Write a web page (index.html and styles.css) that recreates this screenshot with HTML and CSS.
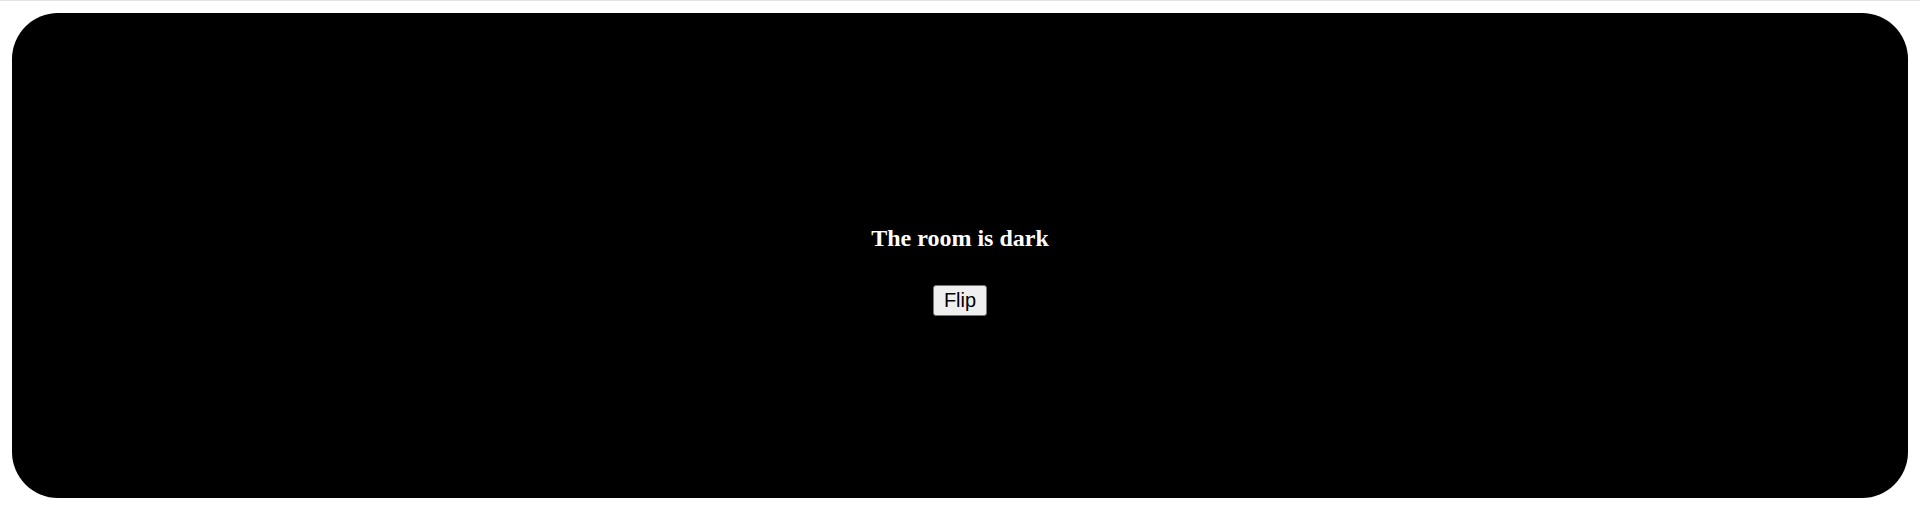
FILE: index.html
```html
<!DOCTYPE html>
<html>
<head>
<meta charset="utf-8">
<link rel="stylesheet" href="styles.css">
</head>
<body>
<div class="topline"></div>
<main class="room">
  <h2 class="title">The room is dark</h2>
  <button class="flip">Flip</button>
</main>
</body>
</html>
```
FILE: styles.css
```css
html, body {
  margin: 0;
  padding: 0;
  background: #ffffff;
}
.topline {
  height: 1px;
  background: #e3e3e3;
}
.room {
  margin: 12px 12px 0 12px;
  height: 485px;
  background: #000000;
  border-radius: 46px;
  display: flex;
  flex-direction: column;
  align-items: center;
  justify-content: center;
  padding-top: 30px;
  box-sizing: border-box;
}
.title {
  margin: 0 0 33px 0;
  color: #ffffff;
  font-family: "Liberation Serif", "Times New Roman", serif;
  font-weight: bold;
  font-size: 24px;
}
.flip {
  font-family: "Liberation Sans", Arial, sans-serif;
  font-size: 20px;
  color: #000000;
  background: #efefef;
  border: 1px solid #767676;
  border-radius: 3px;
  padding: 3px 10px;
  line-height: normal;
}
```
